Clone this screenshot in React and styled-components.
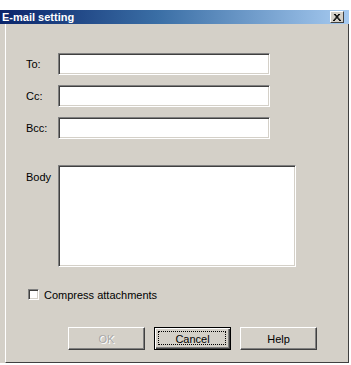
import React from 'react'
import styled, { createGlobalStyle } from 'styled-components'

const Global = createGlobalStyle`
  html, body {
    margin: 0;
    padding: 0;
    background: #ffffff;
    overflow: hidden;
  }
  body {
    font-family: "Liberation Sans", Arial, sans-serif;
    font-size: 11px;
    color: #000;
  }
`

const Window = styled.div`
  margin-top: 10px;
  width: 349px;
`

const TitleBar = styled.div`
  height: 14px;
  display: flex;
  align-items: center;
  justify-content: space-between;
  padding: 0 5px 0 2px;
  background: linear-gradient(to right, #0a246a 0%, #3a6ea5 45%, #a6caf0 100%);
`

const Title = styled.span`
  color: #ffffff;
  font-weight: bold;
  font-size: 11px;
  line-height: 14px;
`

const CloseButton = styled.div`
  width: 12px;
  height: 10px;
  display: flex;
  align-items: center;
  justify-content: center;
  background: #d4d0c8;
  border-top: 1px solid #ffffff;
  border-left: 1px solid #ffffff;
  border-right: 1px solid #404040;
  border-bottom: 1px solid #404040;
`

const Frame = styled.div`
  display: flex;
  background: #d4d0c8;
  padding-left: 5px;
`

const Panel = styled.div`
  flex: 1;
  height: 339px;
  box-sizing: border-box;
  border-left: 1px solid #ffffff;
  border-right: 1px solid #404040;
  border-bottom: 1px solid #404040;
  padding: 29px 0 0 20px;
`

const FieldRow = styled.div`
  display: flex;
  align-items: ${p => (p.$top ? 'flex-start' : 'center')};
  margin-top: ${p => p.$gap || 0}px;
`

const Label = styled.span`
  width: 32px;
  color: #000;
  padding-top: ${p => (p.$top ? 6 : 0)}px;
`

const Sunken = styled.div`
  width: ${p => p.$w}px;
  height: ${p => p.$h}px;
  box-sizing: border-box;
  background: #ffffff;
  border-top: 1px solid #808080;
  border-left: 1px solid #808080;
  border-right: 1px solid #ffffff;
  border-bottom: 1px solid #ffffff;
  box-shadow: inset 1px 1px 0 #404040, inset -1px -1px 0 #d4d0c8;
`

const CheckRow = styled.label`
  display: flex;
  align-items: center;
  height: 11px;
  margin-top: 22px;
  padding-left: 2px;
  gap: 5px;
`

const Box = styled.span`
  width: 11px;
  height: 11px;
  box-sizing: border-box;
  background: #ffffff;
  border-top: 1px solid #808080;
  border-left: 1px solid #808080;
  border-right: 1px solid #ffffff;
  border-bottom: 1px solid #ffffff;
  box-shadow: inset 1px 1px 0 #404040, inset -1px -1px 0 #d4d0c8;
`

const Buttons = styled.div`
  display: flex;
  gap: 9px;
  margin-top: 27px;
  padding-left: 42px;
`

const Button = styled.div`
  position: relative;
  width: 77px;
  height: 23px;
  box-sizing: border-box;
  display: flex;
  align-items: center;
  justify-content: center;
  background: #d4d0c8;
  border-top: 1px solid ${p => (p.$default ? '#000' : '#ffffff')};
  border-left: 1px solid ${p => (p.$default ? '#000' : '#ffffff')};
  border-right: 1px solid ${p => (p.$default ? '#000' : '#404040')};
  border-bottom: 1px solid ${p => (p.$default ? '#000' : '#404040')};
  box-shadow: ${p =>
    p.$default
      ? 'inset 1px 1px 0 #ffffff, inset -1px -1px 0 #404040, inset -2px -2px 0 #808080'
      : 'inset -1px -1px 0 #808080'};
  color: ${p => (p.$disabled ? '#a8a8a8' : '#000')};
  text-shadow: ${p => (p.$disabled ? '1px 1px 0 #ffffff' : 'none')};
  font-size: 11px;
`

const Focus = styled.span`
  position: absolute;
  inset: 3px 4px 4px 3px;
  border: 1px dotted #000;
`

const App = () => {
  return (
    <>
      <Global />
      <Window>
        <TitleBar>
          <Title>E-mail setting</Title>
          <CloseButton>
            <svg width="8" height="7" viewBox="0 0 8 7">
              <path d="M1 0 L7 7 M2 0 L8 7 M7 0 L1 7 M6 0 L0 7" stroke="#000" strokeWidth="1" />
            </svg>
          </CloseButton>
        </TitleBar>
        <Frame>
          <Panel>
            <FieldRow>
              <Label>To:</Label>
              <Sunken $w={212} $h={22} />
            </FieldRow>
            <FieldRow $gap={10}>
              <Label>Cc:</Label>
              <Sunken $w={212} $h={22} />
            </FieldRow>
            <FieldRow $gap={10}>
              <Label>Bcc:</Label>
              <Sunken $w={212} $h={22} />
            </FieldRow>
            <FieldRow $gap={26} $top>
              <Label $top>Body</Label>
              <Sunken $w={238} $h={102} />
            </FieldRow>
            <CheckRow>
              <Box />
              <span>Compress attachments</span>
            </CheckRow>
            <Buttons>
              <Button $disabled>OK</Button>
              <Button $default>
                <Focus />
                Cancel
              </Button>
              <Button>Help</Button>
            </Buttons>
          </Panel>
        </Frame>
      </Window>
    </>
  )
}

export default App
